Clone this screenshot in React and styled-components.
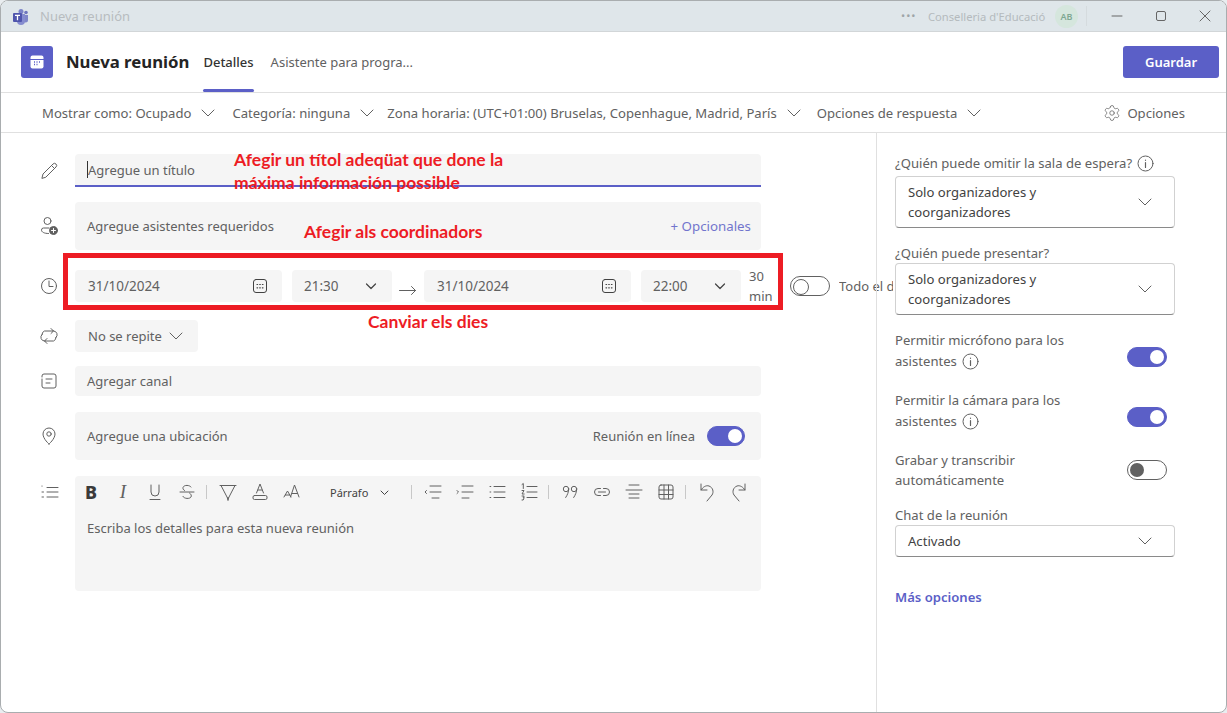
import React from "react";
import styled, { createGlobalStyle } from "styled-components";
import { Settings } from "lucide-react";

const Global = createGlobalStyle`
  html, body { margin: 0; padding: 0; background: #e9edf0; }
  body { font-family: "Noto Sans", "Open Sans", sans-serif; font-size: 13px; color: #616161; overflow: hidden; }
  * { box-sizing: border-box; }
`;

const Win = styled.div`
  position: relative; width: 1227px; height: 713px; background: #fff; overflow: hidden;
  border: 1px solid #a9adaf; border-radius: 8px; display: flex; flex-direction: column;
`;
const TitleBar = styled.div`
  height: 31px; flex: none; background: #dfe6ea; border-bottom: 1px solid #d2d6d8;
  display: flex; align-items: center; padding-left: 11px; color: #b4babd;
`;
const TitleText = styled.span`margin-left: 11px; font-size: 13px; color: #b7bcbf; flex: 1;`;
const Dots = styled.span`width: 14px; margin-right: 13px; letter-spacing: 1px; font-size: 11px; line-height: 8px; color: #9ea5a8; white-space: nowrap;`;
const Org = styled.span`font-size: 11.2px; color: #b4babd; margin-right: 9px; width: 118px; white-space: nowrap;`;
const Avatar = styled.span`
  width: 23px; height: 23px; border-radius: 50%; background: #d5e6dd; color: #7fa893;
  font-size: 9px; font-weight: 600; display: flex; align-items: center; justify-content: center;
`;
const VSep = styled.span`width: 1px; height: 20px; background: #d5dbde; margin: 0 24px 0 8px;`;
const WinBtns = styled.div`display: flex; gap: 32px; margin-right: 15px; align-items: center;`;

const Header = styled.div`
  height: 61px; flex: none; display: flex; align-items: stretch; padding: 0 7px 0 20px;
  border-bottom: 1px solid #e0e0e0;
`;
const AppIcon = styled.div`
  width: 32px; height: 32px; margin-top: 14px; background: #5b5fc7; border-radius: 3px;
  display: flex; align-items: center; justify-content: center;
`;
const Title = styled.h1`margin: 14px 14px 0 13px; line-height: 32px; font-size: 16.75px; font-weight: 700; color: #242424; white-space: nowrap;`;
const Tab = styled.div`
  margin-top: 14px; margin-right: 17px; line-height: 32px; font-size: 13px; white-space: nowrap;
  font-weight: ${p => (p.$active ? 500 : 400)}; color: ${p => (p.$active ? "#333" : "#616161")};
  position: relative;
  &::after {
    content: ""; position: absolute; left: 0; right: 0; top: 43px; height: 3px;
    background: ${p => (p.$active ? "#5b5fc7" : "transparent")}; border-radius: 2px;
  }
`;
const Spacer = styled.div`flex: 1;`;
const SaveBtn = styled.button`
  width: 96px; height: 32px; margin-top: 14px; background: #5b5fc7; color: #fff; border: 0; border-radius: 3px;
  font: 600 13px "Noto Sans", sans-serif;
`;

const Toolbar = styled.div`
  height: 40px; flex: none; display: flex; align-items: center; padding: 0 41px 0 41px;
  border-bottom: 1px solid #e0e0e0; color: #616161; font-size: 13.1px; white-space: nowrap;
`;
const ToolItem = styled.div`display: flex; align-items: center; gap: 10px; margin-right: ${p => p.$gap}px;`;
const OptionsBtn = styled.div`display: flex; align-items: center; gap: 6px;`;

const Main = styled.div`flex: 1; display: flex; min-height: 0;`;
const Form = styled.div`width: 875px; flex: none; padding: 21px 0 0 38px;`;
const Row = styled.div`display: flex; align-items: ${p => p.$align || "center"}; margin-top: ${p => p.$top || 0}px;`;
const RowIcon = styled.div`width: 36px; flex: none; display: flex; padding-top: ${p => p.$pt || 0}px;`;
const Field = styled.div`
  width: ${p => p.$w || 686}px; height: ${p => p.$h}px; flex: none; background: #f5f5f5; border-radius: 4px;
  display: flex; align-items: center; padding: 0 ${p => p.$pr || 12}px 0 ${p => p.$pl || 12}px; color: #616161; font-size: 13px; white-space: nowrap;
`;
const TitleField = styled(Field)`border-bottom: 2px solid #5b5fc7; border-radius: 4px 4px 0 0;`;
const Caret = styled.span`width: 1px; height: 17px; background: #333; margin-right: 0;`;
const Optional = styled.span`margin-left: auto; margin-right: -2px; color: #5b5fc7; opacity: .85; font-size: 13.3px;`;
const DateBox = styled(Field)`justify-content: space-between; margin-right: ${p => p.$mr ?? 10}px; font-size: 13.5px;`;
const Arrow = styled.div`width: 32px; flex: none; display: flex; justify-content: center; padding-top: 8px;`;
const Mins = styled.div`width: 30px; flex: none; margin: -4px 11px -4px -2px; font-size: 13px; line-height: 20px; height: 40px; color: #616161;`;
const Switch = styled.span`
  width: ${p => p.$w || 40}px; height: 20px; border-radius: 10px; flex: none; position: relative; display: block;
  background: ${p => (p.$on ? "#5b5fc7" : "#fff")}; border: 1px solid ${p => (p.$on ? "#5b5fc7" : "#616161")};
  margin-top: ${p => (p.$low ? 12 : 0)}px;
  &::after {
    content: ""; position: absolute; top: 2px; width: 14px; height: 14px; border-radius: 50%;
    left: ${p => (p.$on ? `${(p.$w || 40) - 18}px` : "2px")};
    background: ${p => (p.$on ? "#fff" : p.$dark ? "#616161" : "#fff")};
    border: ${p => (p.$on || p.$dark ? "0" : "1px solid #616161")};
  }
`;
const AllDay = styled.span`margin-left: 9px; width: 54px; flex: none; overflow: hidden; color: #616161; white-space: nowrap;`;
const RepeatBox = styled(Field)`gap: 7px; padding-left: 13px;`;
const OnlineLabel = styled.span`margin-left: auto; margin-right: 12px;`;
const SwitchEnd = styled.span`margin-right: 4px;`;

const Editor = styled.div`width: 686px; height: 115px; background: #f5f5f5; border-radius: 4px;`;
const EdBar = styled.div`display: flex; align-items: center; height: 32px;`;
const EdBtn = styled.span`
  width: 32px; height: 32px; flex: none; display: flex; align-items: center; justify-content: center; color: #424242;
`;
const BoldGlyph = styled.span`font: 800 18px "Noto Sans", sans-serif; color: #3a3a3a;`;
const ItalicGlyph = styled.span`font: italic 400 19px "Liberation Serif", serif; color: #616161;`;
const EdSep = styled.span`
  width: 9px; height: 14px; flex: none; position: relative;
  &::after { content: ""; position: absolute; left: 3px; top: 0; width: 1px; height: 14px; background: #c8c8c8; }
`;
const ParaBtn = styled.span`width: 100px; flex: none; padding-left: 22px; display: flex; align-items: center; gap: 12px; font-size: 11px; color: #424242;`;
const EdText = styled.div`padding: 11px 12px; font-size: 13px; color: #616161;`;

const Side = styled.aside`
  position: relative; flex: 1; padding: 20px 0 0 18px; font-size: 13.1px; color: #616161;
  border-left: 1px solid #e0e0e0;
`;
const Label = styled.div`display: flex; align-items: center; gap: 5px; line-height: 20px; margin-top: ${p => p.$top || 0}px; white-space: nowrap;`;
const Select = styled.div`
  width: 280px; margin-top: ${p => p.$top ?? 3}px; border: 1px solid #d1d1d1; border-bottom-color: #8a8a8a; border-radius: 4px;
  padding: 5px 12px; line-height: 20px; display: flex; justify-content: space-between; align-items: center; color: #424242;
`;
const SelectText = styled.div`width: 190px;`;
const SelectChevron = styled.span`display: flex; margin-right: 10px;`;
const ToggleRow = styled.div`
  width: 272px; display: flex; justify-content: space-between; align-items: center; margin-top: ${p => p.$top}px; line-height: ${p => p.$lh || 21}px;
`;
const ToggleLabel = styled.div`width: 190px;`;
const InlineInfo = styled.span`display: inline-flex; vertical-align: -4px; margin-left: 5px; height: 17px; margin-bottom: -2px;`;
const More = styled.div`margin-top: 30px; color: #5b5fc7; font-weight: 600; line-height: 20px;`;

const Overlay = styled.div`position: absolute; inset: 0; pointer-events: none;`;
const RedBox = styled.div`position: absolute; left: 62px; top: 252px; width: 720px; height: 57px; border: 5px solid #ed1c24;`;
const Note = styled.div`
  position: absolute; left: ${p => p.$x}px; top: ${p => p.$y}px; color: #ed1c24; font: 700 17.5px/23px Lato, sans-serif; white-space: nowrap;
`;

const S = styled.svg`display: block; flex: none; fill: none; stroke: ${p => p.$c || "#616161"}; stroke-width: 1; stroke-linecap: round; stroke-linejoin: round;`;
const Ic = ({ s = 20, c, vb = 20, children }) => <S $c={c} width={s} height={s} viewBox={`0 0 ${vb} ${vb}`}>{children}</S>;

const Chevron = ({ s = 14 }) => <Ic s={s} vb={14}><path d="M1 4l6 6 6-6" /></Ic>;
const ChevronSm = () => <Ic s={14} c="#424242" vb={14}><path d="M2.500 5l4.500 4.500L11.500 5" strokeWidth="1.200" /></Ic>;
const DateIc = () => <Ic s={16} vb={16} c="#424242"><rect x="1.500" y="1.500" width="13" height="13" rx="2.500" /><path d="M5 6.500h.6M7.700 6.500h.6M10.400 6.500h.6M5 9.800h.6M7.700 9.800h.6M10.400 9.800h.6" strokeWidth="1.200" /></Ic>;
const Info = () => <Ic s={17} vb={17}><circle cx="8.500" cy="8.500" r="7.500" /><path d="M8.500 7.500v5M8.500 5v.3" strokeWidth="1.200" /></Ic>;
const Teams = () => (
  <svg width="17" height="17" viewBox="0 0 17 17">
    <circle cx="9" cy="3.500" r="2.500" fill="#7b83c8" /><circle cx="14" cy="4.500" r="1.800" fill="#6f76bf" />
    <path d="M11 7h5v5a2.500 2.500 0 0 1-5 0z" fill="#7f86c9" /><path d="M5 6h8v7a3.500 3.500 0 0 1-8 0z" fill="#858ccf" />
    <rect x="1" y="5" width="9" height="9" rx="1" fill="#4f55ad" /><path d="M3 7.300h5M5.500 7.300v5" stroke="#fff" strokeWidth="1.300" />
  </svg>
);

export default function App() {
  return (
    <Win>
      <Global />
      <TitleBar>
        <Teams />
        <TitleText>Nueva reunión</TitleText>
        <Dots>•••</Dots>
        <Org>Conselleria d'Educació</Org>
        <Avatar>AB</Avatar>
        <VSep />
        <WinBtns>
          <Ic s={12} vb={12} c="#666"><path d="M1 6h10" /></Ic>
          <Ic s={12} vb={12} c="#666"><rect x="1.500" y="1.500" width="9" height="9" rx="1.500" /></Ic>
          <Ic s={12} vb={12} c="#666"><path d="M1 1l10 10M11 1L1 11" /></Ic>
        </WinBtns>
      </TitleBar>
      <Header>
        <AppIcon>
          <svg width="16" height="16" viewBox="0 0 16 16">
            <path d="M3.500 1.500h9a2 2 0 0 1 2 2v1.500h-13V3.500a2 2 0 0 1 2-2z" fill="#fff" />
            <path d="M1.500 6h13v6.500a2 2 0 0 1-2 2h-9a2 2 0 0 1-2-2z" fill="#fff" />
            <path d="M5 8h1M7.500 8h1M10 8h1M5 10.500h1M7.500 10.500h1" stroke="#5b5fc7" strokeWidth="1.300" />
          </svg>
        </AppIcon>
        <Title>Nueva reunión</Title>
        <Tab $active>Detalles</Tab>
        <Tab>Asistente para progra...</Tab>
        <Spacer />
        <SaveBtn>Guardar</SaveBtn>
      </Header>
      <Toolbar>
        <ToolItem $gap={17}>Mostrar como: Ocupado <Chevron /></ToolItem>
        <ToolItem $gap={13}>Categoría: ninguna <Chevron /></ToolItem>
        <ToolItem $gap={16}>Zona horaria: (UTC+01:00) Bruselas, Copenhague, Madrid, París <Chevron /></ToolItem>
        <ToolItem $gap={0}>Opciones de respuesta <Chevron /></ToolItem>
        <Spacer />
        <OptionsBtn>
          <Settings size={18} strokeWidth={1} color="#616161" />
          Opciones
        </OptionsBtn>
      </Toolbar>
      <Main>
        <Form>
          <Row>
            <RowIcon><Ic><path d="M3 17l1-4L14 3a1.800 1.800 0 0 1 3 3L7 16z" /><path d="M12.500 4.500l3 3" /></Ic></RowIcon>
            <TitleField $h={33}><Caret />Agregue un título</TitleField>
          </Row>
          <Row $top={15}>
            <RowIcon>
              <Ic>
                <circle cx="8.500" cy="5" r="3.500" />
                <path d="M10 12H4.500A2 2 0 0 0 2.500 14c0 2 2.500 3.500 7 3.500" />
                <circle cx="14.500" cy="14.500" r="4" fill="#616161" />
                <path d="M14.500 12.500v4M12.500 14.500h4" stroke="#fff" />
              </Ic>
            </RowIcon>
            <Field $h={48}>Agregue asistentes requeridos<Optional>+ Opcionales</Optional></Field>
          </Row>
          <Row $top={20}>
            <RowIcon><Ic><circle cx="10" cy="10" r="7.500" /><path d="M10 5v5.500h4" /></Ic></RowIcon>
            <DateBox $w={207} $h={32} $pr={14} $pl={13}>31/10/2024<DateIc /></DateBox>
            <DateBox $w={100} $h={32} $pr={14} $mr={0}>21:30<ChevronSm /></DateBox>
            <Arrow><Ic s={18} vb={18}><path d="M0.500 9.500h16M12.500 5.500l4 4-4 4" /></Ic></Arrow>
            <DateBox $w={207} $h={32} $pr={14} $pl={13}>31/10/2024<DateIc /></DateBox>
            <DateBox $w={100} $h={32} $pr={14}>22:00<ChevronSm /></DateBox>
            <Mins>30 min</Mins>
            <Switch />
            <AllDay>Todo el día</AllDay>
          </Row>
          <Row $top={18}>
            <RowIcon>
              <Ic><path d="M6 15H5.500a3.800 3.800 0 0 1-2.500-6.500M14 5h.5a3.800 3.800 0 0 1 2.500 6.500M6 15h8.500a3.800 3.800 0 0 0 2.500-3.500M14 5H5.500A3.800 3.800 0 0 0 3 8.500M12 2.500L14.500 5 12 7.500M8 12.500L5.500 15 8 17.500" /></Ic>
            </RowIcon>
            <RepeatBox $w={123} $h={32}>No se repite <Chevron /></RepeatBox>
          </Row>
          <Row $top={14}>
            <RowIcon>
              <Ic><path d="M3 6V5a2 2 0 0 1 2-2h10a2 2 0 0 1 2 2v10a2 2 0 0 1-2 2H5a2 2 0 0 1-2-2V8M7 8h6M7 12h4" /></Ic>
            </RowIcon>
            <Field $h={30}>Agregar canal</Field>
          </Row>
          <Row $top={16}>
            <RowIcon>
              <Ic><path d="M10 18s6-5 6-10a6 6 0 0 0-12 0c0 5 6 10 6 10z" /><circle cx="10" cy="8" r="2.200" /></Ic>
            </RowIcon>
            <Field $h={48} $pr={12}>
              Agregue una ubicación
              <OnlineLabel>Reunión en línea</OnlineLabel>
              <SwitchEnd><Switch $on $w={38} /></SwitchEnd>
            </Field>
          </Row>
          <Row $top={16} $align="flex-start">
            <RowIcon $pt={6}>
              <Ic><path d="M8 5.500h11M8 10h11M8 15h11M3 4v.2M3 10h1.500M3 15h1.500" /></Ic>
            </RowIcon>
            <Editor>
              <EdBar>
                <EdBtn><BoldGlyph>B</BoldGlyph></EdBtn>
                <EdBtn><ItalicGlyph>I</ItalicGlyph></EdBtn>
                <EdBtn><Ic><path d="M6 3v7a4 4 0 0 0 8 0V3M5 17.500h10" /></Ic></EdBtn>
                <EdBtn><Ic><path d="M14 5c-1-2-7-2.500-8 .5-.3 1 .3 2.500 1.500 3M3 10h14M12.500 11c1.500 1 2.300 2.500 1.500 4-1 2-7 2-8-.5" /></Ic></EdBtn>
                <EdSep />
                <EdBtn><Ic><path d="M2 3.500h16M3 3.500l6.500 12.500h1L17 3.500M9.500 16l.5 2.500.5-2.500" /></Ic></EdBtn>
                <EdBtn><Ic><path d="M6.500 11L10 2l3.500 9M8 8h4" /><rect x="3" y="13.500" width="14" height="4" rx="1.500" /></Ic></EdBtn>
                <EdBtn><Ic><path d="M2 15l3.500-6L9 15M3.300 13h4.400M8.500 15L12.500 3l4.500 12M10 11.500h5.500" /></Ic></EdBtn>
                <ParaBtn>Párrafo <Ic s={9} vb={9} c="#424242"><path d="M1 3l3.500 3.500L8 3" /></Ic></ParaBtn>
                <EdSep />
                <EdBtn><Ic><path d="M7 4h11M7 10h11M9 16h7M3.500 8.500L2 10l1.500 1.500" /></Ic></EdBtn>
                <EdBtn><Ic><path d="M7 4h11M7 10h11M7 16h7M2 8.500L3.500 10 2 11.500" /></Ic></EdBtn>
                <EdBtn><Ic><path d="M7 4.500h11M7 10h11M7 15.500h11M3 4.500h.8M3 10h.8M3 15.500h.8" /></Ic></EdBtn>
                <EdBtn><Ic><path d="M8 4.500h10M8 10h10M8 15.500h10M3 2.500l1.300-1v5M3 8.500h2L3 12h2.200M3 14h2.200l-1 1.500h1l-1 2.500H3" /></Ic></EdBtn>
                <EdSep />
                <EdBtn><Ic><circle cx="6" cy="7" r="2.700" /><path d="M8.700 7c0 3-1.300 6-3 8.500" /><circle cx="14" cy="7" r="2.700" /><path d="M16.700 7c0 3-1.300 6-3 8.500" /></Ic></EdBtn>
                <EdBtn><Ic><path d="M8.500 6.500H6a3.500 3.500 0 0 0 0 7h2.500M11.500 6.500H14a3.500 3.500 0 0 1 0 7h-2.500M6.500 10h7" /></Ic></EdBtn>
                <EdBtn><Ic><path d="M5 3h10M2 8h16M5 12h10M5 16h10" /></Ic></EdBtn>
                <EdBtn><Ic><rect x="3" y="3" width="14" height="14" rx="2" /><path d="M3 8h14M3 12.500h14M8 3v14M12.500 3v14" /></Ic></EdBtn>
                <EdSep />
                <EdBtn><Ic><path d="M4 2v6h6M4 8c2-3 5-5 8-4 4 1.500 5 6 3 9l-5 6" /></Ic></EdBtn>
                <EdBtn><Ic><path d="M16 2v6h-6M16 8c-2-3-5-5-8-4-4 1.500-5 6-3 9l5 6" /></Ic></EdBtn>
              </EdBar>
              <EdText>Escriba los detalles para esta nueva reunión</EdText>
            </Editor>
          </Row>
        </Form>
        <Side>
          <Label>¿Quién puede omitir la sala de espera? <Info /></Label>
          <Select>
            <SelectText>Solo organizadores y coorganizadores</SelectText>
            <SelectChevron><Chevron /></SelectChevron>
          </Select>
          <Label $top={15}>¿Quién puede presentar?</Label>
          <Select $top={0}>
            <SelectText>Solo organizadores y coorganizadores</SelectText>
            <SelectChevron><Chevron /></SelectChevron>
          </Select>
          <ToggleRow $top={15}>
            <ToggleLabel>Permitir micrófono para los asistentes<InlineInfo><Info /></InlineInfo></ToggleLabel>
            <Switch $on $low />
          </ToggleRow>
          <ToggleRow $top={18}>
            <ToggleLabel>Permitir la cámara para los asistentes<InlineInfo><Info /></InlineInfo></ToggleLabel>
            <Switch $on $low />
          </ToggleRow>
          <ToggleRow $top={18} $lh={20}>
            <ToggleLabel>Grabar y transcribir automáticamente</ToggleLabel>
            <Switch $dark />
          </ToggleRow>
          <Label $top={15}>Chat de la reunión</Label>
          <Select $top={0}>
            <SelectText>Activado</SelectText>
            <SelectChevron><Chevron /></SelectChevron>
          </Select>
          <More>Más opciones</More>
        </Side>
      </Main>
      <Overlay>
        <RedBox />
        <Note $x={233} $y={147}>Afegir un títol adeqüat que done la</Note>
        <Note $x={233} $y={170}>máxima información possible</Note>
        <Note $x={303} $y={219}>Afegir als coordinadors</Note>
        <Note $x={367} $y={309}>Canviar els dies</Note>
      </Overlay>
    </Win>
  );
}
